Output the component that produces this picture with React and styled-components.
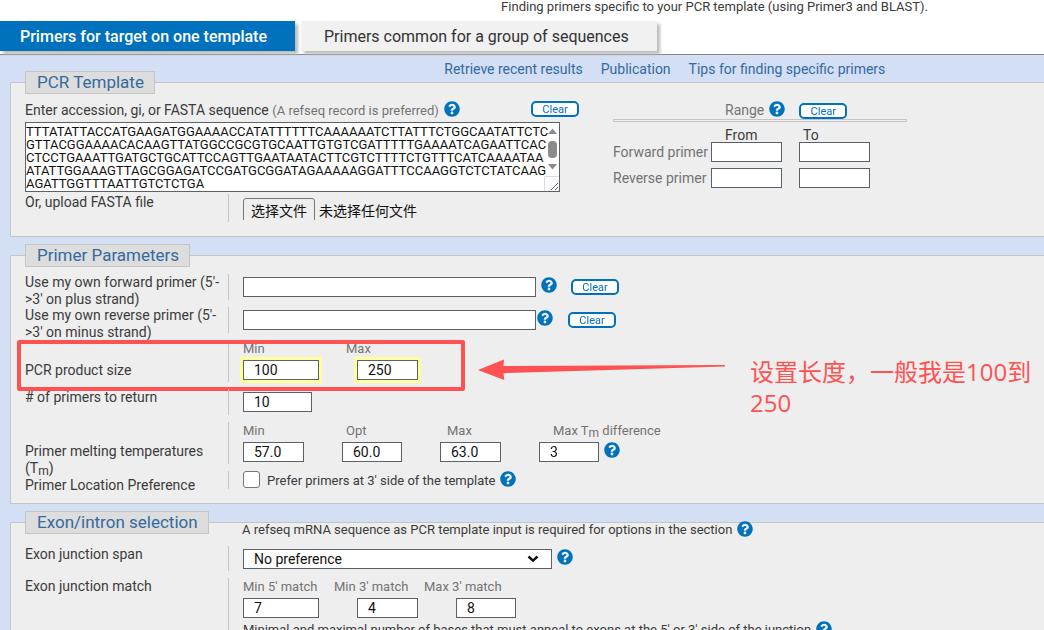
import React from "react"
import styled, { createGlobalStyle } from "styled-components"
import { FaQuestionCircle } from "react-icons/fa"

const sequence = [
  "TTTATATTACCATGAAGATGGAAAACCATATTTTTTCAAAAAATCTTATTTCTGGCAATATTCTC",
  "GTTACGGAAAACACAAGTTATGGCCGCGTGCAATTGTGTCGATTTTTGAAAATCAGAATTCAC",
  "CTCCTGAAATTGATGCTGCATTCCAGTTGAATAATACTTCGTCTTTTCTGTTTCATCAAAATAA",
  "ATATTGGAAAGTTAGCGGAGATCCGATGCGGATAGAAAAAGGATTTCCAAGGTCTCTATCAAG",
  "AGATTGGTTTAATTGTCTCTGA\n\n\n",
].join("\n")

const Help = ({ topic }) => (
  <HelpButton type="button" aria-label={topic}>
    <FaQuestionCircle size={16} />
  </HelpButton>
)

const OwnPrimer = ({ id, title, gap, space }) => (
  <Row $height={33}>
    <RowLabel htmlFor={id}>{title}</RowLabel>
    <Field $top={3}>
      <Controls $gap={gap}>
        <TextInput id={id} $width={293} />
        <Help topic="Primer help" />
        <ClearButton type="button" $space={space}>Clear</ClearButton>
      </Controls>
    </Field>
  </Row>
)

const App = () => (
  <Page>
    <GlobalStyle />
    <Intro>
      Finding primers specific to your PCR template (using Primer3 and BLAST).
    </Intro>
    <Tabs>
      <Tab href="#one" $active>Primers for target on one template</Tab>
      <Tab href="#group">Primers common for a group of sequences</Tab>
    </Tabs>
    <Form>
      <Links>
        <a href="#recent">Retrieve recent results</a>
        <a href="#publication">Publication</a>
        <a href="#tips">Tips for finding specific primers</a>
      </Links>

      <Panel>
        <Legend>PCR Template</Legend>
        <Template>
          <Sequence>
            <SequenceHead>
              <label htmlFor="seq">
                Enter accession, gi, or FASTA sequence{" "}
                <Hint>(A refseq record is preferred)</Hint>
              </label>
              <Help topic="Sequence help" />
              <ClearButton type="button" $end>Clear</ClearButton>
            </SequenceHead>
            <SequenceWrap>
              <SequenceBox id="seq" defaultValue={sequence} spellCheck="false" />
              <svg width="16" height="68" viewBox="0 0 16 68">
                <path d="M5 11 L9.5 5.5 L14 11 Z" fill="#8b8b8b" />
                <rect x="5" y="18" width="9" height="17" rx="4" fill="#8b8b8b" />
                <path d="M5 41 L9.5 46.5 L14 41 Z" fill="#8b8b8b" />
                <path d="M1.5 68 V53.5 H16 V68 Z" fill="#fcfcfc" />
                <path d="M1.5 68 V53.5 H16" fill="none" stroke="#ddd" />
                <path d="M8 67 L15 60 M12 67 L15 64" stroke="#666" />
              </svg>
            </SequenceWrap>
          </Sequence>
          <Range>
            <RangeHead>
              <span>Range</span>
              <Help topic="Range help" />
              <ClearButton type="button" $space={9}>Clear</ClearButton>
            </RangeHead>
            <Rule />
            <RangeCaptions>
              <span>From</span>
              <span>To</span>
            </RangeCaptions>
            <RangeRow>
              <span>Forward primer</span>
              <TextInput $width={71} aria-label="Forward primer from" />
              <TextInput $width={71} aria-label="Forward primer to" />
            </RangeRow>
            <RangeRow>
              <span>Reverse primer</span>
              <TextInput $width={71} aria-label="Reverse primer from" />
              <TextInput $width={71} aria-label="Reverse primer to" />
            </RangeRow>
          </Range>
        </Template>
        <Row $height={35}>
          <RowLabel htmlFor="upload">Or, upload FASTA file</RowLabel>
          <Field $top={4}>
            <Upload>
              <input id="upload" type="file" />
              <UploadButton htmlFor="upload">选择文件</UploadButton>
              <span>未选择任何文件</span>
            </Upload>
          </Field>
        </Row>
      </Panel>

      <Panel>
        <Legend>Primer Parameters</Legend>
        <OwnPrimer
          id="forward"
          title="Use my own forward primer (5'->3' on plus strand)"
          gap={5}
          space={9}
        />
        <OwnPrimer
          id="reverse"
          title="Use my own reverse primer (5'->3' on minus strand)"
          gap={1}
          space={14}
        />
        <Row $height={49}>
          <RowLabel as="span" $top={22}>PCR product size</RowLabel>
          <Field>
            <Captions $columns="103px auto">
              <label htmlFor="sizeMin">Min</label>
              <label htmlFor="sizeMax">Max</label>
            </Captions>
            <Controls $gap={38}>
              <TextInput id="sizeMin" defaultValue="100" $width={76} $marked />
              <TextInput id="sizeMax" defaultValue="250" $width={61} $marked />
            </Controls>
          </Field>
          <Highlight />
          <Callout>
            <svg width="248" height="22" viewBox="0 0 248 22" fill="#fe5252">
              <path d="M0 11 L26 0.5 L25.5 7 L247 6 L247 7.5 L25.5 14.2 L26.3 21 Z" />
            </svg>
            <p>设置长度，一般我是100到250</p>
          </Callout>
        </Row>
        <Row $height={33}>
          <RowLabel htmlFor="count"># of primers to return</RowLabel>
          <Field $top={3}>
            <TextInput id="count" defaultValue="10" $width={69} />
          </Field>
        </Row>
        <Row $height={49}>
          <RowLabel as="span" $top={21}>
            Primer melting temperatures (T<sub>m</sub>)
          </RowLabel>
          <Field>
            <Captions $columns="103px 101px 106px auto">
              <label htmlFor="tmMin">Min</label>
              <label htmlFor="tmOpt">Opt</label>
              <label htmlFor="tmMax">Max</label>
              <label htmlFor="tmDiff">Max T<sub>m</sub> difference</label>
            </Captions>
            <Controls $gap={5}>
              <Controls $gap={38}>
                <TextInput id="tmMin" defaultValue="57.0" $width={61} />
                <TextInput id="tmOpt" defaultValue="60.0" $width={60} />
                <TextInput id="tmMax" defaultValue="63.0" $width={61} />
                <TextInput id="tmDiff" defaultValue="3" $width={60} />
              </Controls>
              <Help topic="Melting temperature help" />
            </Controls>
          </Field>
        </Row>
        <Row $height={25}>
          <RowLabel as="span" $top={6}>Primer Location Preference</RowLabel>
          <Field>
            <Controls $gap={5}>
              <Check>
                <input type="checkbox" />
                Prefer primers at 3' side of the template
              </Check>
              <Help topic="Location help" />
            </Controls>
          </Field>
        </Row>
      </Panel>

      <Panel>
        <Legend>Exon/intron selection</Legend>
        <SectionNote>
          A refseq mRNA sequence as PCR template input is required for options in the section
          <Help topic="Exon help" />
        </SectionNote>
        <Row $height={32}>
          <RowLabel htmlFor="span">Exon junction span</RowLabel>
          <Field $top={3}>
            <Controls $gap={5}>
              <SelectWrap>
                <select id="span" defaultValue="none">
                  <option value="none">No preference</option>
                </select>
                <svg width="12" height="8" viewBox="0 0 12 8" fill="none">
                  <path d="M1.5 1.5 L6 5.7 L10.5 1.5" stroke="#111" strokeWidth="2.4" />
                </svg>
              </SelectWrap>
              <Help topic="Junction span help" />
            </Controls>
          </Field>
        </Row>
        <Row $height={80}>
          <RowLabel as="span">Exon junction match</RowLabel>
          <Field>
            <Captions $columns="91px 90px auto">
              <label htmlFor="min5">Min 5' match</label>
              <label htmlFor="min3">Min 3' match</label>
              <label htmlFor="max3">Max 3' match</label>
            </Captions>
            <Controls $gap={38}>
              <TextInput id="min5" defaultValue="7" $width={76} />
              <TextInput id="min3" defaultValue="4" $width={61} />
              <TextInput id="max3" defaultValue="8" $width={60} />
            </Controls>
            <Note>
              Minimal and maximal number of bases that must anneal to exons at the 5' or 3' side of the junction
              <Help topic="Junction match help" />
            </Note>
          </Field>
        </Row>
      </Panel>
    </Form>
  </Page>
)

export default App

const GlobalStyle = createGlobalStyle`
  * {
    box-sizing: border-box;
  }
  body {
    margin: 0;
    background: #fff;
    color: #3b3b3b;
    font-family: Roboto, "Noto Sans CJK SC", sans-serif;
    font-size: 14px;
    line-height: 17px;
  }
  input, select, textarea, button {
    font-family: inherit;
    margin: 0;
  }
  sub {
    font-size: 12px;
    line-height: 0;
    vertical-align: -2px;
  }
`

const Page = styled.main`
  height: 100vh;
  overflow: hidden;
`

const Intro = styled.p`
  margin: 0;
  padding-left: 48%;
  height: 21px;
  font-size: 13px;
  line-height: 14px;
  white-space: nowrap;
`

const Tabs = styled.nav`
  display: flex;
  gap: 6px;
  height: 34px;
  border-bottom: 1px solid #888;
`

const Tab = styled.a`
  height: 30px;
  padding: 0 28px 0 ${props => (props.$active ? 20 : 23)}px;
  background: ${props => (props.$active ? "#0071bc" : "#f1f1f1")};
  color: ${props => (props.$active ? "#fff" : "#333")};
  font-size: 16px;
  font-weight: ${props => (props.$active ? 500 : 400)};
  line-height: 31px;
  text-decoration: none;
  white-space: nowrap;
  box-shadow: 3px 3px 3px #bbb;
`

const Form = styled.form`
  padding: 6px 0 0 10px;
  background: #d3dff5;
`

const Links = styled.nav`
  display: flex;
  gap: 18px;
  padding-left: 42%;
  height: 10px;
  white-space: nowrap;
  a {
    color: #336a9f;
    text-decoration: none;
  }
`

const Panel = styled.fieldset`
  min-width: 0;
  margin: 0 0 7px;
  padding: 7px 0 7px 14px;
  border: 1px solid #c5c5c5;
  border-right: 0;
  background: #eee;
`

const Legend = styled.legend`
  height: 23px;
  padding: 0 10px 0 11px;
  background: #ddd;
  border: 1px solid #c5c5c5;
  color: #336a9f;
  font-size: 17px;
  line-height: 21px;
`

const Row = styled.div`
  position: relative;
  display: grid;
  grid-template-columns: 203px 1fr;
  grid-template-rows: 100%;
  height: ${props => props.$height}px;
  padding-bottom: 7px;
`

const RowLabel = styled.label`
  padding: ${props => props.$top || 0}px 6px 0 0;
`

const Field = styled.div`
  padding: ${props => props.$top || 0}px 0 0 14px;
  border-left: 1px solid #c5c5c5;
`

const Captions = styled.div`
  display: grid;
  grid-template-columns: ${props => props.$columns};
  height: 20px;
  color: #737373;
  font-size: 13px;
  line-height: 18px;
`

const Controls = styled.div`
  display: flex;
  gap: ${props => props.$gap}px;
`

const TextInput = styled.input`
  width: ${props => props.$width}px;
  height: 20px;
  padding: 0 10px;
  border: 1px solid #5b616b;
  background: #fff;
  color: #111;
  font-size: 14px;
  box-shadow: ${props => (props.$marked ? "0 0 0 3px #ffff99" : "none")};
`

const HelpButton = styled.button`
  flex: none;
  width: 16px;
  height: 16px;
  padding: 0;
  border: 0;
  border-radius: 8px;
  background: none;
  color: #0071bc;
  svg {
    display: block;
  }
`

const ClearButton = styled.button`
  width: 48px;
  height: 16px;
  margin-left: ${props => (props.$end ? "auto" : (props.$space || 0) + "px")};
  margin-right: ${props => (props.$end ? "-19px" : "0")};
  margin-top: ${props => (props.$end ? 0 : 2)}px;
  padding: 0;
  border: 2px solid #0071bc;
  border-radius: 5px;
  background: #fff;
  color: #0071bc;
  font-size: 11px;
  line-height: 13px;
`

const Template = styled.div`
  display: flex;
  gap: 53px;
`

const Sequence = styled.div`
  width: 535px;
`

const SequenceHead = styled.div`
  display: flex;
  gap: 5px;
  height: 21px;
  line-height: 19px;
`

const Hint = styled.span`
  color: #737373;
  font-size: 13px;
`

const SequenceWrap = styled.div`
  position: relative;
  svg {
    position: absolute;
    top: 1px;
    right: 1px;
    pointer-events: none;
  }
`

const SequenceBox = styled.textarea`
  display: block;
  width: 100%;
  height: 70px;
  padding: 2px 0 0;
  border: 1px solid #5b616b;
  background: #fff;
  color: #111;
  font-size: 13px;
  line-height: 13px;
  white-space: pre;
  overflow-x: hidden;
  overflow-y: scroll;
  resize: both;
`

const Range = styled.div`
  width: 294px;
  color: #737373;
`

const RangeHead = styled.div`
  display: flex;
  gap: 5px;
  height: 18px;
  padding-left: 112px;
  line-height: 19px;
`

const Rule = styled.hr`
  height: 3px;
  margin: 0 0 7px;
  border: 1px solid #c5c5c5;
`

const RangeCaptions = styled.div`
  display: grid;
  grid-template-columns: 78px auto;
  padding-left: 112px;
  color: #3b3b3b;
  line-height: 13px;
`

const RangeRow = styled.div`
  display: grid;
  grid-template-columns: 98px 71px 71px;
  align-items: center;
  margin-bottom: 6px;
  input:last-child {
    margin-left: 17px;
  }
`

const Upload = styled.div`
  position: relative;
  display: flex;
  gap: 4px;
  height: 22px;
  overflow: hidden;
  color: #111;
  line-height: 26px;
  input {
    position: absolute;
    opacity: 0;
    width: 70px;
  }
`

const UploadButton = styled.label`
  height: 26px;
  padding: 0 7px;
  border: 1px solid #767676;
  border-radius: 3px;
  line-height: 24px;
`

const Check = styled.label`
  display: flex;
  gap: 7px;
  font-size: 13px;
  line-height: 19px;
  input {
    appearance: none;
    width: 17px;
    height: 17px;
    border: 1px solid #767676;
    border-radius: 3px;
    background: #fff;
  }
`

const SectionNote = styled.div`
  display: flex;
  gap: 5px;
  margin: -20px 0 7px;
  padding-left: 217px;
  font-size: 13px;
  line-height: 18px;
`

const Note = styled.div`
  display: flex;
  gap: 5px;
  margin-top: 3px;
  font-size: 13px;
`

const SelectWrap = styled.div`
  position: relative;
  select {
    display: block;
    appearance: none;
    width: 309px;
    height: 20px;
    padding: 0 10px;
    border: 1px solid #5b616b;
    border-radius: 0;
    background: #fff;
    color: #111;
    font-size: 14px;
  }
  svg {
    position: absolute;
    top: 6px;
    right: 13px;
    pointer-events: none;
  }
`

/* Marker frame laid over the product size row */
const Highlight = styled.div`
  position: absolute;
  top: 0;
  left: -8px;
  width: 448px;
  height: 51px;
  border: 4px solid #fe5252;
  border-radius: 2px;
`

const Callout = styled.div`
  position: absolute;
  top: 16px;
  left: 453px;
  display: flex;
  gap: 24px;
  color: #fe5252;
  svg {
    flex: none;
    margin-top: 3px;
  }
  p {
    width: 290px;
    margin: 0;
    font-family: "Open Sans", "Noto Sans CJK SC", sans-serif;
    font-size: 24px;
    line-height: 31px;
  }
`
